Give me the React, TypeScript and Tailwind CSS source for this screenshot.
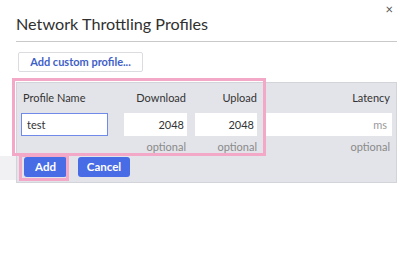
import React, { useState } from 'react';

const font = { fontFamily: 'Lato, "Open Sans", sans-serif' };

const App: React.FC = () => {
  const [name, setName] = useState('test');
  const [down, setDown] = useState('2048');
  const [up, setUp] = useState('2048');
  const [latency, setLatency] = useState('');

  return (
    <div className="relative w-[400px] h-[271px] bg-white text-[#333] overflow-hidden" style={font}>
      <div className="flex items-start justify-between pl-[16px] pr-[7px]">
        <h1 className="pt-[13px] text-[16.2px] leading-[22px] font-normal text-[#303030]">
          Network Throttling Profiles
        </h1>
        <button className="mt-[2px] text-[13px] leading-[14px] text-[#555]">×</button>
      </div>

      <div className="ml-[16px] mr-[3px] mt-[6px] border-t border-[#c9c9c9]" />

      <div className="flex pl-[18px] pt-[10px]">
        <button className="h-[20px] w-[125px] rounded-[2px] border border-[#dadce0] bg-white text-[11px] font-bold text-[#3f5fc8] leading-[18px]">
          Add custom profile...
        </button>
      </div>

      {/* faint strip behind the panel on the left */}
      <div className="absolute left-0 top-[156px] h-[24px] w-[16px] bg-[#f1f1f3]" />

      <div className="relative ml-[16px] mr-[3px] mt-[10px] h-[101px] border border-[#d3d4d9] bg-[#e3e4e9] pl-[4px] pr-[4px]">
        <div className="flex pt-[7px] text-[11px] leading-[15px] text-[#333]">
          <div className="w-[87px] pl-[2px]">Profile Name</div>
          <div className="ml-[16px] w-[63px] text-right pr-[1px]">Download</div>
          <div className="ml-[8px] w-[62px] text-right">Upload</div>
          <div className="ml-[8px] flex-1 text-right pr-[2px]">Latency</div>
        </div>

        <div className="mt-[8px] flex text-[11px]">
          <input
            value={name}
            onChange={e => setName(e.target.value)}
            className="h-[23px] w-[87px] border border-[#6f8ae8] bg-white px-[5px] text-[#333] outline-none"
            style={font}
          />
          <input
            value={down}
            onChange={e => setDown(e.target.value)}
            className="ml-[16px] h-[23px] w-[63px] bg-white px-[3px] text-right text-[#333] outline-none"
            style={font}
          />
          <input
            value={up}
            onChange={e => setUp(e.target.value)}
            className="ml-[8px] h-[23px] w-[62px] bg-white px-[3px] text-right text-[#333] outline-none"
            style={font}
          />
          <input
            value={latency}
            onChange={e => setLatency(e.target.value)}
            placeholder="ms"
            className="ml-[8px] h-[23px] flex-1 min-w-0 bg-white px-[5px] text-right text-[#333] placeholder:text-[#9a9a9a] outline-none"
            style={font}
          />
        </div>

        <div className="mt-[3px] flex text-[11px] leading-[15px] text-[#8a8a8a]">
          <div className="w-[87px]" />
          <div className="ml-[16px] w-[63px] text-right pr-[1px]">optional</div>
          <div className="ml-[8px] w-[62px] text-right">optional</div>
          <div className="ml-[8px] flex-1 text-right pr-[2px]">optional</div>
        </div>

        <div className="mt-[3px] flex gap-[11px] pl-[3px]">
          <button className="h-[20px] w-[43px] rounded-[3px] bg-[#476ce6] text-[11.5px] font-bold text-white">Add</button>
          <button className="h-[20px] w-[52px] rounded-[3px] bg-[#476ce6] text-[11.5px] font-bold text-white">Cancel</button>
        </div>
      </div>

      {/* highlight outlines */}
      <div className="pointer-events-none absolute left-[12px] top-[78px] h-[78px] w-[254px] border-[3px] border-[#f4a8c8]" />
      <div className="pointer-events-none absolute left-[19px] top-[154px] h-[27px] w-[50px] border-[3px] border-[#f4a8c8]" />
    </div>
  );
};

export default App;
